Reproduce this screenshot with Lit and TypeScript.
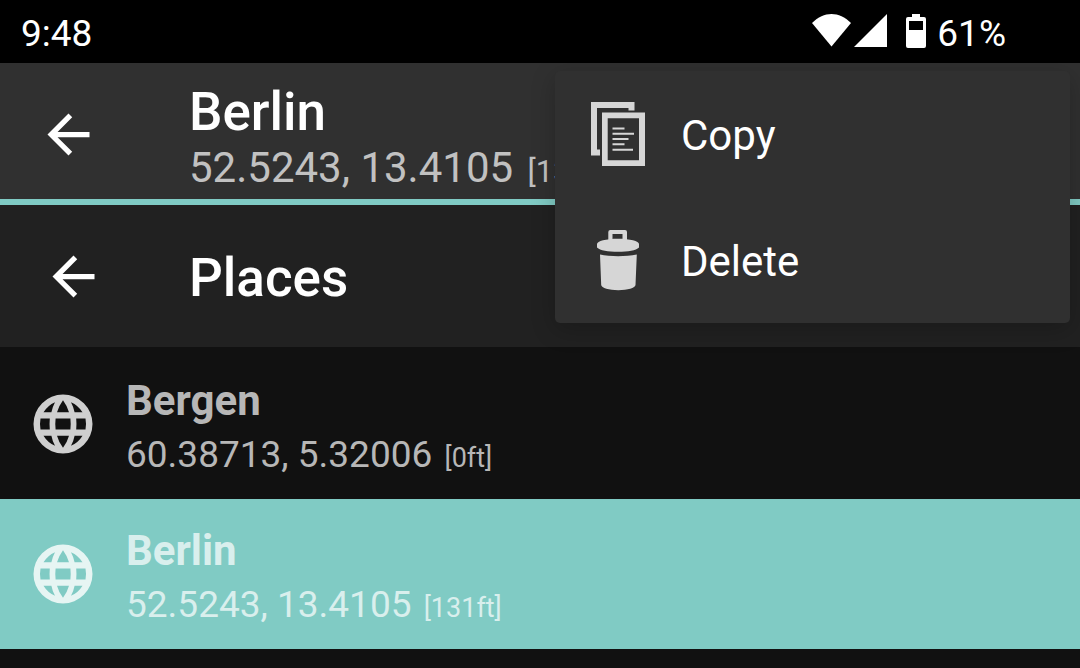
import { LitElement, html, css, svg } from "lit";
import { customElement, property } from "lit/decorators.js";

interface Place {
  name: string;
  coords: string;
  altitude: string;
  selected?: boolean;
}

const places: Place[] = [
  { name: "Bergen", coords: "60.38713, 5.32006", altitude: "[0ft]" },
  { name: "Berlin", coords: "52.5243, 13.4105", altitude: "[131ft]", selected: true },
];

const arrowIcon = html`<svg class="arrow" viewBox="0 0 24 24" aria-hidden="true">
  ${svg`<path d="M20 11H7.83l5.59-5.59L12 4l-8 8 8 8 1.41-1.41L7.83 13H20v-2z"/>`}
</svg>`;

@customElement("status-bar")
export class StatusBar extends LitElement {
  static styles = css`
    :host {
      display: flex;
      align-items: center;
      height: 63px;
      padding: 0 74px 0 21px;
      box-sizing: border-box;
      background: #000;
      color: #fff;
      font-size: 37px;
      line-height: 44px;
    }
    .text { padding-top: 4px; }
    .signals { margin-left: auto; width: 75px; height: 35px; fill: currentColor; }
    .battery { margin: 0 11px 0 19px; width: 20px; height: 35px; fill: currentColor; }
  `;

  render() {
    return html`
      <span class="text">9:48</span>
      <svg class="signals" viewBox="0 0 75 35" aria-hidden="true">
        <path d="M0 9C12-3 27-3 39 9L19.500 32.500z" />
        <path d="M42 33L75 0v33z" />
      </svg>
      <svg class="battery" viewBox="0 0 20 35" aria-hidden="true">
        <path fill-rule="evenodd" d="M6 0h8v3h4q2 0 2 2v27q0 2-2 2H2q-2 0-2-2V5q0-2 2-2h4zM3 7v9h14V7z" />
      </svg>
      <span class="text">61%</span>
    `;
  }
}

@customElement("overflow-menu")
export class OverflowMenu extends LitElement {
  static styles = css`
    :host {
      display: block;
      border-radius: 5px;
      background: #303030;
      box-shadow: 0 6px 24px rgba(0, 0, 0, 0.22);
    }
    .item {
      display: flex;
      align-items: center;
      gap: 31px;
      width: 100%;
      height: 126px;
      padding: 0 31px;
      border: 0;
      background: none;
      color: #fff;
      font: inherit;
      font-size: 42px;
      line-height: 50px;
      text-align: left;
    }
    .icon { width: 64px; height: 64px; flex: none; fill: #d6d6d6; }
    .label { padding-top: 4px; }
  `;

  render() {
    return html`
      <button class="item" role="menuitem">
        <svg class="icon" viewBox="0 0 64 64" aria-hidden="true">
          <path d="M5 0h43.500v8.500h-6V6H11v41.500h3V53.500H5z" />
          <path fill-rule="evenodd" d="M16 10.500h43V64H16zM21.700 16.200v42H53v-42z" />
          <path d="M26.500 25.500h12v2h-12zM26.500 30.800h21.500v2H26.500zM26.500 36h16v2h-16zM26.500 41.300h12v2h-12zM26.500 46.700h20.500v2H26.500z" />
        </svg>
        <span class="label">Copy</span>
      </button>
      <button class="item" role="menuitem">
        <svg class="icon" viewBox="0 0 64 64" aria-hidden="true">
          <path fill-rule="evenodd" d="M22.300 12V4q0-2 2-2H39q2 0 2 2v8zM26.500 6v5h10V6z" />
          <path d="M11 16c0-3 9-5.300 21-5.300S53 13 53 16v3.500c-3 3-11 4.300-21 4.300s-18-1.300-21-4.300z" />
          <path d="M14 26.500c10 2.200 26 2.200 36.800 0L49.500 57c-.2 3-8 5.200-17.200 5.200S15.400 60 15.200 57z" />
        </svg>
        <span class="label">Delete</span>
      </button>
    `;
  }
}

@customElement("place-row")
export class PlaceRow extends LitElement {
  @property({ attribute: false }) place!: Place;
  @property({ type: Boolean, reflect: true }) selected = false;

  static styles = css`
    :host {
      display: flex;
      align-items: center;
      gap: 27px;
      height: 150px;
      padding: 0 27px;
      box-sizing: border-box;
      color: #b7b7b7;
      --icon: #cfcfcf;
    }
    :host([selected]) {
      background: #80cbc4;
      color: #d9efed;
      --icon: #e6f5f3;
    }
    .globe { width: 72px; height: 72px; flex: none; fill: var(--icon); }
    .text { display: flex; flex-direction: column; gap: 7px; padding-top: 4px; white-space: nowrap; }
    .name { font-size: 42px; line-height: 50px; font-weight: 700; }
    .coords { font-size: 37px; line-height: 44px; }
    .altitude { margin-left: 3px; font-size: 27px; line-height: 1; }
  `;

  render() {
    return html`
      <svg class="globe" viewBox="-36 -36 72 72" aria-hidden="true">
        <path fill-rule="evenodd" d="M-29.500 0a29.500 29.500 0 1 0 59 0a29.500 29.500 0 1 0-59 0z
          M-7.400-5.400H7.400Q8 0 7.400 5.400H-7.400Q-8 0-7.400-5.400z
          M-22.500-5.400H-13.200Q-13.700 0-13.200 5.400H-22.500Q-23.500 0-22.500-5.400z
          M22.500-5.400H13.200Q13.700 0 13.200 5.400H22.500Q23.500 0 22.500-5.400z
          M0-23.800Q4.300-18 6-11.700H-6Q-4.300-18 0-23.800z
          M0 23.800Q4.300 18 6 11.700H-6Q-4.300 18 0 23.800z
          M-8-21.800Q-10.600-17-11.600-11.700H-19.500Q-15.400-18.500-8-21.800z
          M8-21.800Q10.600-17 11.600-11.700H19.500Q15.400-18.500 8-21.800z
          M-8 21.800Q-10.600 17-11.600 11.700H-19.500Q-15.400 18.500-8 21.800z
          M8 21.800Q10.600 17 11.600 11.700H19.500Q15.400 18.500 8 21.800z" />
      </svg>
      <div class="text">
        <span class="name">${this.place.name}</span>
        <span class="coords">${this.place.coords} <span class="altitude">${this.place.altitude}</span></span>
      </div>
    `;
  }
}

@customElement("app-root")
export class AppRoot extends LitElement {
  static styles = css`
    :host {
      display: block;
      min-height: 100vh;
      background: #111;
      color: #fff;
      font-family: Roboto, "Liberation Sans", sans-serif;
    }
    h1, h2, p { margin: 0; }
    .header {
      position: relative;
      display: flex;
      align-items: center;
      padding: 7px 37px 0;
      height: 129px;
      background: #303030;
      border-bottom: 6px solid #80cbc4;
    }
    .back { display: flex; padding: 0; border: 0; background: none; color: inherit; }
    .arrow { width: 63px; height: 63px; fill: currentColor; }
    .titles { margin-left: 89px; padding-top: 4px; white-space: nowrap; }
    .title { font-size: 53px; line-height: 62px; font-weight: 500; }
    .subtitle { font-size: 42px; line-height: 50px; color: #c1c1c1; }
    .altitude { margin-left: 4px; font-size: 31px; line-height: 1; }
    .menu { position: absolute; top: 8px; right: 10px; width: 515px; z-index: 1; }
    .places-bar {
      display: flex;
      align-items: center;
      height: 142px;
      padding: 0 42px;
      background: #212121;
    }
    .places-bar .title { margin-left: 84px; padding-top: 4px; }
    .list { padding-top: 2px; }
  `;

  render() {
    return html`
      <status-bar></status-bar>
      <header class="header">
        <button class="back" aria-label="Navigate up">${arrowIcon}</button>
        <div class="titles">
          <h1 class="title">Berlin</h1>
          <p class="subtitle">52.5243, 13.4105 <span class="altitude">[131ft]</span></p>
        </div>
        <overflow-menu class="menu" role="menu"></overflow-menu>
      </header>
      <div class="places-bar">
        <button class="back" aria-label="Close places">${arrowIcon}</button>
        <h2 class="title">Places</h2>
      </div>
      <main class="list">
        ${places.map((p) => html`<place-row .place=${p} ?selected=${!!p.selected}></place-row>`)}
      </main>
    `;
  }
}
